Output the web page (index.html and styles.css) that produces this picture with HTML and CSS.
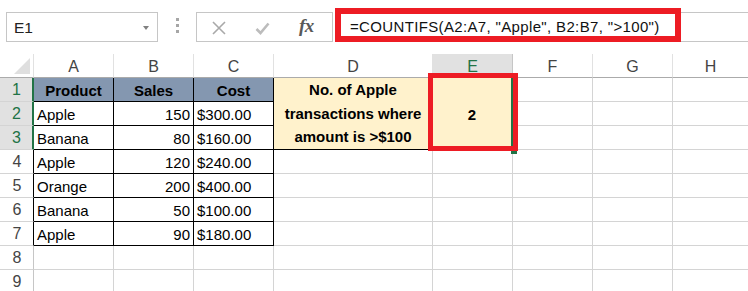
FILE: index.html
```html
<!DOCTYPE html>
<html>
<head>
<meta charset="utf-8">
<link rel="stylesheet" href="styles.css">
</head>
<body>
<div class="page">
  <div class="toolbar">
    <div class="namebox"><span class="ref">E1</span><span class="caret"></span></div>
    <div class="grip"><i></i><i></i><i></i></div>
    <div class="buttons">
      <svg class="ico-x" width="14" height="14" viewBox="0 0 14 14"><path d="M1 1 L13 13 M13 1 L1 13" stroke="#a9a9a9" stroke-width="1.6" fill="none"/></svg>
      <svg class="ico-ok" width="15" height="13" viewBox="0 0 15 13"><path d="M1.5 7 L5.5 11 L13.5 1.5" stroke="#bcbcbc" stroke-width="2.6" fill="none"/></svg>
      <span class="fx">fx</span>
    </div>
    <div class="formula">=COUNTIFS(A2:A7, "Apple", B2:B7, "&gt;100")</div>
  </div>

  <div class="sheet">
    <div class="h corner"><span class="tri"></span></div>
    <div class="h col">A</div>
    <div class="h col">B</div>
    <div class="h col">C</div>
    <div class="h col">D</div>
    <div class="h col sel">E</div>
    <div class="h col">F</div>
    <div class="h col">G</div>
    <div class="h col last">H</div>

    <div class="h row sel">1</div>
    <div class="c t th">Product</div>
    <div class="c t th">Sales</div>
    <div class="c t th">Cost</div>
    <div class="c note">No. of Apple<br>transactions where<br>amount is &gt;$100</div>
    <div class="c result">2</div>
    <div class="c"></div><div class="c"></div><div class="c last"></div>

    <div class="h row sel">2</div>
    <div class="c t">Apple</div><div class="c t num">150</div><div class="c t">$300.00</div>
    <div class="c"></div><div class="c"></div><div class="c last"></div>

    <div class="h row sel">3</div>
    <div class="c t">Banana</div><div class="c t num">80</div><div class="c t">$160.00</div>
    <div class="c"></div><div class="c"></div><div class="c last"></div>

    <div class="h row tb">4</div>
    <div class="c t">Apple</div><div class="c t num">120</div><div class="c t">$240.00</div>
    <div class="c"></div><div class="c"></div><div class="c"></div><div class="c"></div><div class="c last"></div>

    <div class="h row tb">5</div>
    <div class="c t">Orange</div><div class="c t num">200</div><div class="c t">$400.00</div>
    <div class="c"></div><div class="c"></div><div class="c"></div><div class="c"></div><div class="c last"></div>

    <div class="h row tb">6</div>
    <div class="c t">Banana</div><div class="c t num">50</div><div class="c t">$100.00</div>
    <div class="c"></div><div class="c"></div><div class="c"></div><div class="c"></div><div class="c last"></div>

    <div class="h row tb">7</div>
    <div class="c t">Apple</div><div class="c t num">90</div><div class="c t">$180.00</div>
    <div class="c"></div><div class="c"></div><div class="c"></div><div class="c"></div><div class="c last"></div>

    <div class="h row">8</div>
    <div class="c"></div><div class="c"></div><div class="c"></div><div class="c"></div>
    <div class="c"></div><div class="c"></div><div class="c"></div><div class="c last"></div>

    <div class="h row">9</div>
    <div class="c"></div><div class="c"></div><div class="c"></div><div class="c"></div>
    <div class="c"></div><div class="c"></div><div class="c"></div><div class="c last"></div>
  </div>

  <div class="handle"></div>
  <div class="mark mark-formula"></div>
  <div class="mark mark-cell"></div>
</div>
</body>
</html>
```

FILE: styles.css
```css
html, body {
  margin: 0;
  padding: 0;
  background: #ffffff;
  overflow: hidden;
}

.page {
  position: relative;
  width: 748px;
  height: 291px;
  overflow: hidden;
  font-family: "Liberation Sans", Arial, sans-serif;
  color: #000;
}

/* ---------- formula toolbar ---------- */
.toolbar {
  display: flex;
  align-items: flex-start;
  padding-top: 12px;
  height: 30px;
  margin-bottom: 12px;
}

.namebox {
  margin-left: 6px;
  width: 152px;
  height: 30px;
  box-sizing: border-box;
  border: 1px solid #c6c6c6;
  display: flex;
  align-items: center;
  justify-content: space-between;
  padding: 0 8px 0 7px;
}

.ref {
  font-size: 15.5px;
  color: #222;
  padding-top: 1px;
}

.caret {
  width: 0;
  height: 0;
  border-left: 3.5px solid transparent;
  border-right: 3.5px solid transparent;
  border-top: 4px solid #808080;
  margin-top: 1px;
}

.grip {
  width: 38px;
  height: 30px;
  display: flex;
  flex-direction: column;
  align-items: center;
  padding-top: 6px;
  box-sizing: border-box;
  gap: 3px;
}

.grip i {
  display: block;
  width: 3px;
  height: 3px;
  background: #a6a6a6;
}

.buttons {
  width: 137px;
  height: 30px;
  box-sizing: border-box;
  border: 1px solid #c6c6c6;
  display: flex;
  align-items: center;
  padding-left: 15px;
}

.ico-x { margin-top: 1px; }
.ico-ok { margin-left: 29px; margin-top: 2px; }

.fx {
  margin-left: 29px;
  font-family: "Liberation Serif", "Times New Roman", serif;
  font-style: italic;
  font-weight: bold;
  font-size: 19px;
  color: #595959;
  letter-spacing: -0.5px;
  margin-top: -2px;
}

.formula {
  flex: 1;
  margin-left: 2px;
  height: 30px;
  box-sizing: border-box;
  border-top: 1px solid #c6c6c6;
  border-bottom: 1px solid #c6c6c6;
  font-size: 15px;
  letter-spacing: 0.35px;
  line-height: 28px;
  padding-left: 15px;
  color: #111;
  white-space: nowrap;
}

/* ---------- sheet grid ---------- */
.sheet {
  display: grid;
  grid-template-columns: 34px 80px 80px 80px 159px 80px 80px 80px 1fr;
  grid-auto-rows: 24px;
  font-size: 15px;
}

.c, .h {
  box-sizing: border-box;
  border-right: 1px solid #d4d4d4;
  border-bottom: 1px solid #d4d4d4;
  line-height: 23px;
  white-space: nowrap;
  overflow: hidden;
}

.c.last, .h.last { border-right: none; }

.h {
  background: #ffffff;
  color: #444;
  text-align: center;
  font-size: 16px;
}

.h.col {
  border-right-color: #e1e1e1;
  border-bottom-color: #ababab;
  line-height: 25px;
}

.h.col.sel {
  background: #e1e1e1;
  color: #217346;
  border-bottom: 2px solid #217346;
  border-right-color: #c6c6c6;
}

.corner {
  position: relative;
  border-right-color: #e1e1e1;
  border-bottom-color: #ababab;
}

.tri {
  position: absolute;
  right: 3px;
  bottom: 3px;
  width: 0;
  height: 0;
  border-left: 16px solid transparent;
  border-bottom: 16px solid #dfdfdf;
}

.h.row {
  border-right-color: #c6c6c6;
  border-bottom-color: #d4d4d4;
  padding-left: 1px;
}

.h.row.tb { border-right-color: #000; }

.h.row.sel {
  background: #e1e1e1;
  color: #217346;
  border-right: 2px solid #217346;
}

.c.t {
  border-right-color: #000;
  border-bottom-color: #000;
  padding: 1px 3px 0 3px;
}

.c.th {
  background: #8497b0;
  font-weight: bold;
  text-align: center;
}

.c.num { text-align: right; }

.note {
  grid-row: span 3;
  background: #fff2cc;
  font-weight: bold;
  text-align: center;
  line-height: 23.5px;
  border-bottom-color: #000;
  display: flex;
  align-items: center;
  justify-content: center;
}

.result {
  grid-row: span 3;
  background: #fff2cc;
  font-weight: bold;
  display: flex;
  align-items: center;
  justify-content: center;
  border-right: 2px solid #217346;
  padding-top: 2px;
}

/* ---------- overlays ---------- */
.handle {
  position: absolute;
  left: 510px;
  top: 147px;
  width: 6px;
  height: 7px;
  background: #217346;
  border-left: 1px solid #fff;
}

.mark {
  position: absolute;
  box-sizing: border-box;
  border-style: solid;
  border-color: #ed1c24;
}

.mark-formula {
  left: 335px;
  top: 8px;
  width: 346px;
  height: 34px;
  border-width: 6px;
}

.mark-cell {
  left: 428px;
  top: 73px;
  width: 90px;
  height: 78px;
  border-width: 5px;
}
```
